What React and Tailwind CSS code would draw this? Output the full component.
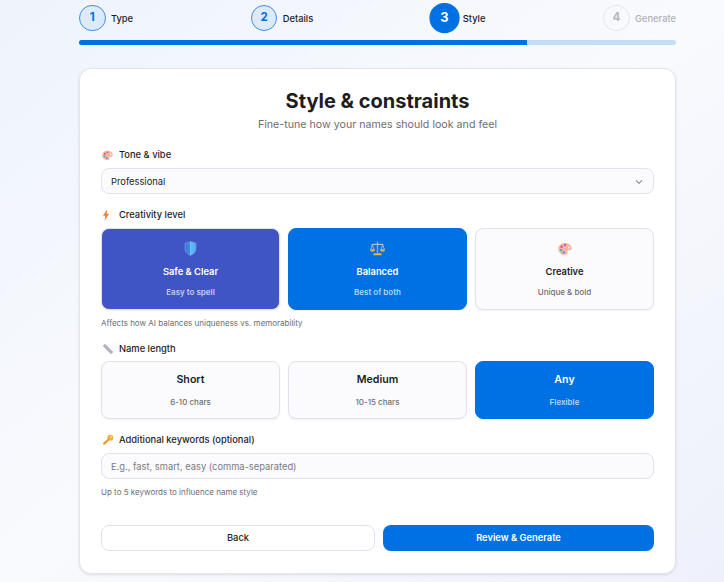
import React from "react";

const Shield = () => (
  <svg width="13" height="15" viewBox="0 0 13 15">
    <defs>
      <linearGradient id="sh" x1="0" x2="1" y1="0" y2="0">
        <stop offset="0" stopColor="#3a78dc" />
        <stop offset="0.5" stopColor="#3f8fe8" />
        <stop offset="0.5" stopColor="#62c4f6" />
        <stop offset="1" stopColor="#4aa8ee" />
      </linearGradient>
    </defs>
    <path d="M6.500 .6 12 2.300v5.200c0 3.200-2.400 5.600-5.500 6.900C3.400 13.100 1 10.700 1 7.500V2.300z" fill="url(#sh)" stroke="#8b9ad8" strokeWidth=".6" />
  </svg>
);

const Scales = () => (
  <svg width="15" height="15" viewBox="0 0 15 15" fill="none">
    <path d="M7.500 .6v12" stroke="#9aa6ba" strokeWidth="1.400" />
    <path d="M2 3.400h11" stroke="#b4bdcc" strokeWidth="1.200" />
    <path d="M2.300 3.400.8 8.500M2.300 3.400 3.900 8.500M12.700 3.400 11.100 8.500M12.700 3.400 14.300 8.500" stroke="#c2cad8" strokeWidth=".8" />
    <path d="M0 8.300h5a2.500 2.500 0 0 1-5 0zM10 8.300h5a2.500 2.500 0 0 1-5 0z" fill="#f4ac48" />
    <path d="M3.500 12.400h8v1.800h-8z" fill="#f8bd45" />
  </svg>
);

const Palette = ({ size = 14 }) => (
  <svg width={size} height={size} viewBox="0 0 14 14">
    <path d="M7 1c3.600 0 6.700 2.300 6.700 5.300 0 1.700-1.300 2.200-2.600 2-1.200-.1-1.900.6-1.500 1.800.4 1.300-.4 2.700-2.600 2.700C3.400 12.800.3 10.300.3 6.900S3.400 1 7 1z" fill="#f6b3a3" />
    <circle cx="7" cy="3" r="1.200" fill="#b56ad6" />
    <circle cx="3.600" cy="4.800" r="1.200" fill="#ee4d8b" />
    <circle cx="3.200" cy="8" r="1.200" fill="#3fb8a8" />
    <circle cx="5.800" cy="10.400" r="1.200" fill="#5b93e0" />
    <circle cx="10.900" cy="5.600" r="1" fill="#fff5ef" />
  </svg>
);

const Bolt = () => (
  <svg width="8" height="12" viewBox="0 0 8 12">
    <path d="M5.200 .3 .9 6.800h2.400L2.500 11.700 7.200 4.800H4.700z" fill="#f0833a" />
  </svg>
);

const Ruler = () => (
  <svg width="12" height="12" viewBox="0 0 12 12">
    <path d="M3 .8 11.200 9 9 11.200.8 3z" fill="#b3afc4" />
  </svg>
);

const KeyIcon = () => (
  <svg width="12" height="12" viewBox="0 0 12 12">
    <circle cx="8.300" cy="3.700" r="3" fill="#f4b13e" />
    <circle cx="9" cy="3" r=".8" fill="#fff1cf" />
    <path d="M6.500 4.200 7.800 5.500 3 10.500H1.200V8.800z" fill="#e8992e" />
  </svg>
);

const Chevron = () => (
  <svg width="8" height="8" viewBox="0 0 8 8" fill="none">
    <path d="M1.300 2.700 4 5.400 6.700 2.700" stroke="#8b8e95" strokeWidth="1.100" strokeLinecap="round" strokeLinejoin="round" />
  </svg>
);

function Step({ n, label, state }) {
  const circle = {
    active: "bg-[#0071e3] border-[#0071e3] text-white scale-[1.12] -translate-y-[0.5px]",
    todo: "border-[#e5e6ec] bg-[#f8f9fd] text-[#b6b7bc]",
    done: "border-[#3f8fe6] bg-[#dceafa] text-[#0071e3]",
  }[state];
  const text = state === "todo" ? "text-[#b0b1b6]" : "text-[#1d1d1f]";
  return (
    <div className="flex items-center gap-[5.33px] h-[30px]">
      <div className={`w-[26.67px] h-[26.67px] rounded-full border flex items-center justify-center text-[11.5px] font-bold ${circle}`}>{n}</div>
      <span className={`text-[9.33px] font-medium pt-[1px] ${text}`}>{label}</span>
    </div>
  );
}

function Label({ icon, children }) {
  return (
    <div className="flex items-center h-[14px] text-[9.33px] font-medium text-[#1d1d1f]">
      <span className="w-[18px] pl-[1px] flex items-center justify-start">{icon}</span>
      {children}
    </div>
  );
}

function OptionCard({ icon, title, sub, variant, h }) {
  const styles = {
    indigo: "bg-[#3f55c6] border-[#e0e3ef] text-white",
    blue: "bg-[#0071e3] border-[#0071e3] text-white",
    plain: "bg-[#fbfbfd] border-[#e1e3ec] text-[#1d1d1f]",
  }[variant];
  const subColor = {
    indigo: "text-[#c8cff2] font-semibold",
    blue: "text-[#b0d5f8] font-semibold",
    plain: "text-[#6e6e73] font-medium",
  }[variant];
  return (
    <div className={`${h} ${styles} border rounded-[8px] flex flex-col items-center justify-center pt-[1px] shadow-[0_1px_2px_rgba(0,0,0,0.06)]`}>
      {icon && <div className="h-[15px] mb-[9px] flex items-center justify-center">{icon}</div>}
      <div className={`${icon ? "text-[9.33px]" : "text-[10.67px]"} font-semibold leading-[14px]`}>{title}</div>
      <div className={`text-[8px] leading-[12px] ${icon ? "mt-[7px]" : "mt-[9px]"} ${subColor}`}>{sub}</div>
    </div>
  );
}

export default function App() {
  return (
    <div
      className="w-[724px] h-[582px] overflow-hidden bg-gradient-to-br from-[#eef4fc] via-[#f9fafe] to-[#eef1fb] text-[#1d1d1f]"
      style={{ fontFamily: "Inter, 'Noto Sans', sans-serif" }}
    >
      <div className="w-[597px] ml-[79px] pt-[3px]">
        <div className="flex justify-between items-center">
          <Step n="1" label="Type" state="done" />
          <Step n="2" label="Details" state="done" />
          <Step n="3" label="Style" state="active" />
          <Step n="4" label="Generate" state="todo" />
        </div>
        <div className="mt-[7px] h-[5px] rounded-full bg-[#c4ddf7] overflow-hidden">
          <div className="h-full w-[75%] bg-[#0071e3]" />
        </div>

        <div className="mt-[23px] h-[506px] bg-white border border-[#e3e5ec] rounded-[12px] shadow-[0_1px_3px_rgba(0,0,0,0.1)] px-[21px] pt-[19px]">
          <h1 className="text-[20px] leading-[26px] font-bold text-center text-[#1d1d1f]">Style &amp; constraints</h1>
          <p className="mt-[3px] text-[10.67px] leading-[16px] text-center text-[#6e6e73]">Fine-tune how your names should look and feel</p>

          <div className="mt-[15px]">
            <Label icon={<Palette size={11} />}>Tone &amp; vibe</Label>
          </div>
          <div className="mt-[6px] h-[26px] border border-[#e1e3ec] bg-[#fbfbfd] rounded-[8px] flex items-center justify-between pl-[9px] pr-[10px] pt-[1px] text-[9.33px] text-[#1d1d1f]">
            <span>Professional</span>
            <Chevron />
          </div>

          <div className="mt-[14px]">
            <Label icon={<Bolt />}>Creativity level</Label>
          </div>
          <div className="mt-[6px] grid grid-cols-3 gap-[8px]">
            <OptionCard h="h-[82px]" icon={<Shield />} title="Safe & Clear" sub="Easy to spell" variant="indigo" />
            <OptionCard h="h-[82px]" icon={<Scales />} title="Balanced" sub="Best of both" variant="blue" />
            <OptionCard h="h-[82px]" icon={<Palette />} title="Creative" sub="Unique & bold" variant="plain" />
          </div>
          <p className="mt-[7px] text-[8px] leading-[12px] text-[#6e6e73]">Affects how AI balances uniqueness vs. memorability</p>

          <div className="mt-[13px]">
            <Label icon={<Ruler />}>Name length</Label>
          </div>
          <div className="mt-[5px] grid grid-cols-3 gap-[8px]">
            <OptionCard h="h-[58px]" title="Short" sub="6-10 chars" variant="plain" />
            <OptionCard h="h-[58px]" title="Medium" sub="10-15 chars" variant="plain" />
            <OptionCard h="h-[58px]" title="Any" sub="Flexible" variant="blue" />
          </div>

          <div className="mt-[14px]">
            <Label icon={<KeyIcon />}>Additional keywords (optional)</Label>
          </div>
          <div className="mt-[6px] h-[26px] border border-[#e1e3ec] bg-[#fbfbfd] rounded-[8px] flex items-center pl-[9px] pt-[1px] text-[9.33px] text-[#7a7a80]">
            E.g., fast, smart, easy (comma-separated)
          </div>
          <p className="mt-[7px] text-[8px] leading-[12px] text-[#6e6e73]">Up to 5 keywords to influence name style</p>

          <div className="mt-[27px] flex gap-[8px]">
            <button className="w-[274px] h-[26px] rounded-[8px] border border-[#e1e3ec] bg-white text-[9.33px] font-medium text-[#1d1d1f]">Back</button>
            <button className="flex-1 h-[26px] rounded-[8px] bg-[#0071e3] text-[9.33px] font-semibold text-white">Review &amp; Generate</button>
          </div>
        </div>
      </div>
    </div>
  );
}
